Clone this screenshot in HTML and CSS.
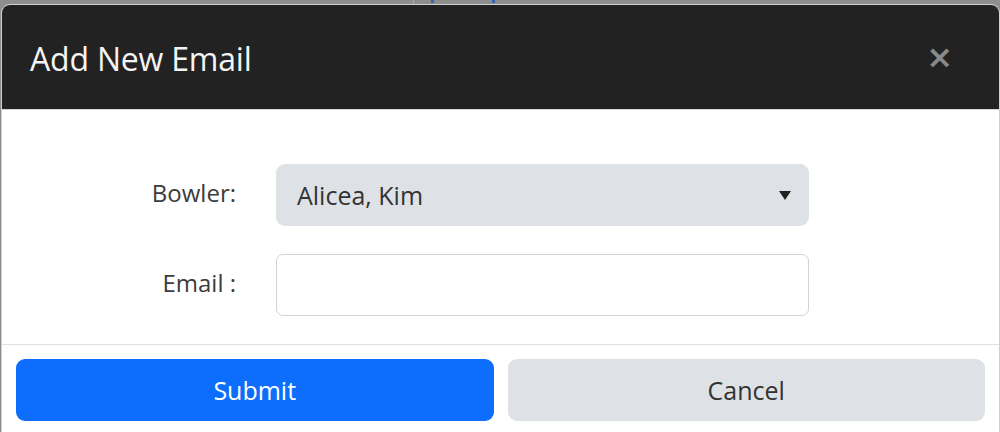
FILE: index.html
```html
<!DOCTYPE html>
<html lang="en">
<head>
<meta charset="utf-8">
<title>Add New Email</title>
<link rel="stylesheet" href="styles.css">
</head>
<body>
<div class="backdrop">
  <span class="peek peek-a"></span>
  <span class="peek peek-b"></span>
</div>
<div class="modal">
  <div class="modal-header">
    <h5 class="modal-title">Add New Email</h5>
    <span class="close">&times;</span>
  </div>
  <div class="modal-body">
    <div class="form-row">
      <label class="form-label">Bowler:</label>
      <div class="select">
        <span>Alicea, Kim</span>
        <svg class="caret" width="12" height="9" viewBox="0 0 12 9"><polygon points="0,0 12,0 6,9" fill="#222"/></svg>
      </div>
    </div>
    <div class="form-row">
      <label class="form-label">Email :</label>
      <div class="input"></div>
    </div>
  </div>
  <div class="modal-footer">
    <button class="btn btn-primary">Submit</button>
    <button class="btn btn-secondary">Cancel</button>
  </div>
</div>
</body>
</html>
```
FILE: styles.css
```css
html, body {
  margin: 0;
  padding: 0;
}
body {
  width: 1000px;
  height: 432px;
  overflow: hidden;
  background: #8e8e8e;
  font-family: "Open Sans", "Noto Sans", sans-serif;
  color: #212529;
}
.backdrop {
  position: relative;
  height: 4px;
}
.peek {
  position: absolute;
  top: 0;
  width: 3px;
  height: 3px;
  background: #3a62b8;
}
.peek-a { left: 431px; }
.peek-b { left: 492px; }
.backdrop::before {
  content: "";
  position: absolute;
  left: 413px;
  top: 0;
  width: 1px;
  height: 4px;
  background: #a8a8a8;
}
.modal {
  margin-left: 1px;
  width: 999px;
  height: 428px;
  background: #fff;
  border-radius: 9px 9px 0 0;
  border: 1px solid #cfcfcf;
  border-bottom: none;
  box-sizing: border-box;
  overflow: hidden;
}
.modal-header {
  height: 105px;
  background: #222222;
  border-bottom: 1px solid #d6d6d6;
  display: flex;
  align-items: center;
  justify-content: space-between;
  padding: 0 46px 0 28px;
  box-sizing: border-box;
}
.modal-title {
  margin: 0;
  font-size: 32px;
  font-weight: 500;
  color: #f4f4f4;
  letter-spacing: -0.2px;
  position: relative;
  top: 1px;
}
.close {
  color: #8a8a8a;
  font-size: 32px;
  font-weight: 700;
  line-height: 1;
  font-family: "DejaVu Sans", sans-serif;
}
.modal-body {
  padding: 54px 0 0 0;
  height: 235px;
  box-sizing: border-box;
  border-bottom: 1px solid #dee2e6;
}
.form-row {
  display: grid;
  grid-template-columns: 234px 533px;
  column-gap: 40px;
  align-items: center;
  margin-bottom: 28px;
}
.form-label {
  text-align: right;
  font-size: 24px;
  color: #3c3c3c;
  position: relative;
  top: -3px;
}
.select {
  height: 62px;
  background: #dee2e6;
  border-radius: 9px;
  display: flex;
  align-items: center;
  justify-content: space-between;
  padding: 0 18px 0 21px;
  box-sizing: border-box;
  font-size: 25px;
  color: #333;
}
.caret {
  display: block;
}
.input {
  height: 62px;
  border: 1px solid #ced4da;
  border-radius: 7px;
  box-sizing: border-box;
  background: #fff;
}
.modal-footer {
  display: flex;
  gap: 14px;
  padding: 14px 14px 0 14px;
}
.btn {
  flex: 1;
  height: 62px;
  border: none;
  border-radius: 9px;
  font-family: "Open Sans", "Noto Sans", sans-serif;
  font-size: 25px;
  cursor: pointer;
}
.btn-primary {
  background: #0d6efd;
  color: #fff;
}
.btn-secondary {
  background: #dee2e6;
  color: #333;
}
```
